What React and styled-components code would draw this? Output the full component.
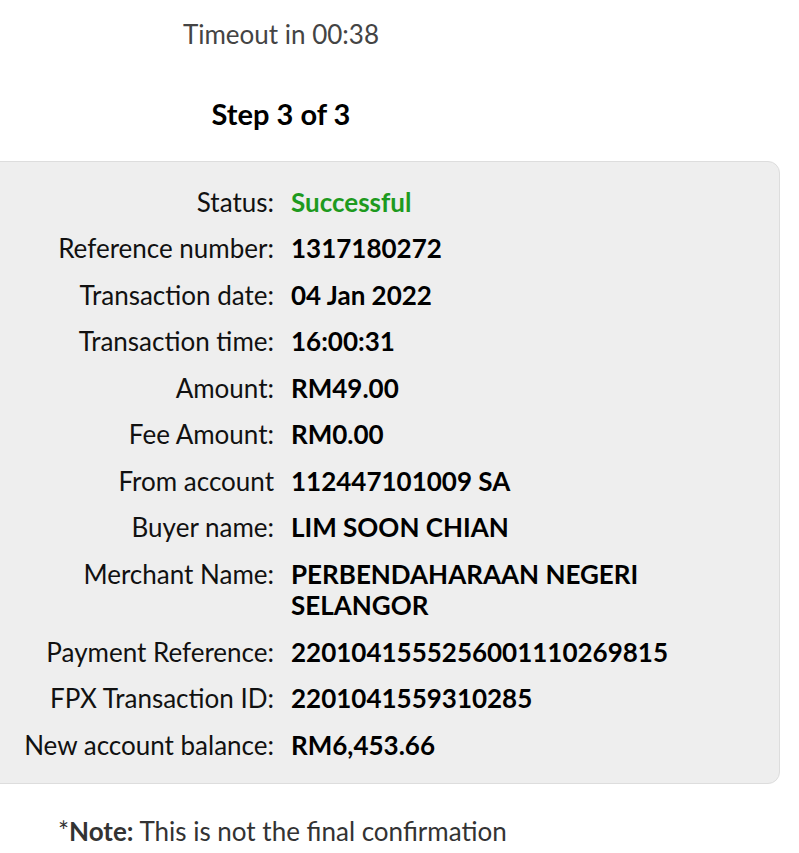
import React from 'react';
import styled, { createGlobalStyle } from 'styled-components';

const GlobalStyle = createGlobalStyle`
  body {
    margin: 0;
    background: #ffffff;
    font-family: Lato, "Open Sans", sans-serif;
    overflow: hidden;
  }
`;

const Page = styled.div`
  width: 799px;
  height: 853px;
  padding-top: 17px;
  box-sizing: border-box;
`;

const Header = styled.div`
  width: 562px;
  display: flex;
  flex-direction: column;
  align-items: center;
`;

const Timeout = styled.div`
  font-size: 26px;
  line-height: 34px;
  color: #444444;
`;

const StepTitle = styled.h2`
  margin: 45px 0 0;
  font-size: 29px;
  line-height: 36px;
  font-weight: 700;
  color: #000000;
`;

const Panel = styled.div`
  margin: 29px 0 0 -12px;
  width: 792px;
  box-sizing: border-box;
  background: #eeeeee;
  border: 1px solid #dddddd;
  border-radius: 12px;
  padding: 25px 10px 22px 0;
  display: grid;
  grid-template-columns: 285px 1fr;
  column-gap: 17px;
  row-gap: 15.3px;
`;

const Label = styled.div`
  text-align: right;
  font-size: 26px;
  line-height: 1.2;
  color: #111111;
`;

const Value = styled.div`
  font-size: 26px;
  line-height: 1.2;
  font-weight: 700;
  color: ${(p) => (p.$success ? '#1e9a1e' : '#000000')};
`;

const Note = styled.p`
  margin: 32px 0 0 58px;
  font-size: 26px;
  line-height: 31px;
  color: #333333;

  strong {
    font-weight: 700;
  }
`;

const rows = [
  ['Status:', 'Successful', true],
  ['Reference number:', '1317180272'],
  ['Transaction date:', '04 Jan 2022'],
  ['Transaction time:', '16:00:31'],
  ['Amount:', 'RM49.00'],
  ['Fee Amount:', 'RM0.00'],
  ['From account', '112447101009 SA'],
  ['Buyer name:', 'LIM SOON CHIAN'],
  ['Merchant Name:', 'PERBENDAHARAAN NEGERI SELANGOR'],
  ['Payment Reference:', '2201041555256001110269815'],
  ['FPX Transaction ID:', '2201041559310285'],
  ['New account balance:', 'RM6,453.66'],
];

export default function App() {
  return (
    <Page>
      <GlobalStyle />
      <Header>
        <Timeout>Timeout in 00:38</Timeout>
        <StepTitle>Step 3 of 3</StepTitle>
      </Header>
      <Panel>
        {rows.map(([label, value, success]) => (
          <React.Fragment key={label}>
            <Label>{label}</Label>
            <Value $success={success}>{value}</Value>
          </React.Fragment>
        ))}
      </Panel>
      <Note>
        *<strong>Note:</strong> This is not the final confirmation
      </Note>
    </Page>
  );
}
